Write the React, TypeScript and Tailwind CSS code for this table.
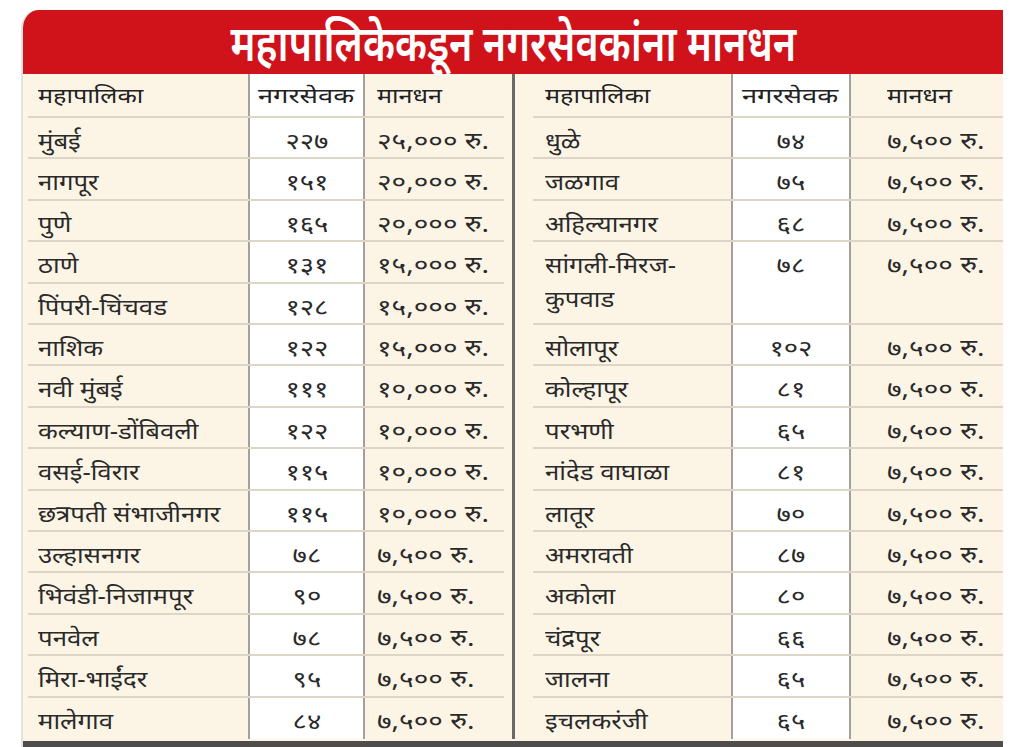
const font = { fontFamily: '"Noto Sans", "Noto Sans Devanagari", "Lato", sans-serif' };

type Row = { name: string[]; count: string; amount: string; tall?: boolean };

const left: Row[] = [
  { name: ["मुंबई"], count: "२२७", amount: "२५,००० रु." },
  { name: ["नागपूर"], count: "१५१", amount: "२०,००० रु." },
  { name: ["पुणे"], count: "१६५", amount: "२०,००० रु." },
  { name: ["ठाणे"], count: "१३१", amount: "१५,००० रु." },
  { name: ["पिंपरी-चिंचवड"], count: "१२८", amount: "१५,००० रु." },
  { name: ["नाशिक"], count: "१२२", amount: "१५,००० रु." },
  { name: ["नवी मुंबई"], count: "१११", amount: "१०,००० रु." },
  { name: ["कल्याण-डोंबिवली"], count: "१२२", amount: "१०,००० रु." },
  { name: ["वसई-विरार"], count: "११५", amount: "१०,००० रु." },
  { name: ["छत्रपती संभाजीनगर"], count: "११५", amount: "१०,००० रु." },
  { name: ["उल्हासनगर"], count: "७८", amount: "७,५०० रु." },
  { name: ["भिवंडी-निजामपूर"], count: "९०", amount: "७,५०० रु." },
  { name: ["पनवेल"], count: "७८", amount: "७,५०० रु." },
  { name: ["मिरा-भाईंदर"], count: "९५", amount: "७,५०० रु." },
  { name: ["मालेगाव"], count: "८४", amount: "७,५०० रु." },
];

const right: Row[] = [
  { name: ["धुळे"], count: "७४", amount: "७,५०० रु." },
  { name: ["जळगाव"], count: "७५", amount: "७,५०० रु." },
  { name: ["अहिल्यानगर"], count: "६८", amount: "७,५०० रु." },
  { name: ["सांगली-मिरज-", "कुपवाड"], count: "७८", amount: "७,५०० रु.", tall: true },
  { name: ["सोलापूर"], count: "१०२", amount: "७,५०० रु." },
  { name: ["कोल्हापूर"], count: "८१", amount: "७,५०० रु." },
  { name: ["परभणी"], count: "६५", amount: "७,५०० रु." },
  { name: ["नांदेड वाघाळा"], count: "८१", amount: "७,५०० रु." },
  { name: ["लातूर"], count: "७०", amount: "७,५०० रु." },
  { name: ["अमरावती"], count: "८७", amount: "७,५०० रु." },
  { name: ["अकोला"], count: "८०", amount: "७,५०० रु." },
  { name: ["चंद्रपूर"], count: "६६", amount: "७,५०० रु." },
  { name: ["जालना"], count: "६५", amount: "७,५०० रु." },
  { name: ["इचलकरंजी"], count: "६५", amount: "७,५०० रु." },
];

function Half({ rows, side }: { rows: Row[]; side: "left" | "right" }) {
  const isLeft = side === "left";
  const c1 = isLeft ? "w-[225px] pl-[15px]" : "w-[216px] pl-[30px]";
  const c2 = isLeft ? "w-[117px]" : "w-[120px]";
  const c3 = isLeft ? "flex-1 pl-[12px]" : "flex-1 pl-[36px]";
  const line = isLeft ? "ml-[5px] mr-[8px]" : "ml-[18px]";
  return (
    <div className="flex h-full flex-1 flex-col">
      {/* header */}
      <div className="relative flex h-[44px] items-center text-[21px] text-[#222]">
        <div className={`${c1} flex h-full items-center`}>
          <span className="inline-block origin-left scale-x-[1.2]">महापालिका</span>
        </div>
        <div className={`${c2} flex h-full items-center justify-center border-x-2 border-[#a4a09a] bg-white`}>
          <span className="inline-block scale-x-[1.3]">नगरसेवक</span>
        </div>
        <div className={`${c3} flex h-full items-center`}>
          <span className="inline-block origin-left scale-x-[1.2]">मानधन</span>
        </div>
        <div className={`absolute bottom-0 left-0 right-0 h-[2px] bg-[#ddd6c6] ${line}`} />
      </div>
      {rows.map((r, i) => (
        <div
          key={i}
          className={`relative flex text-[23px] leading-[34px] text-[#2a2a2a] ${r.tall ? "flex-[2]" : "flex-1"}`}
        >
          <div className={`${c1} pt-[5px]`}>
            {r.name.map((n) => (
              <div key={n} className="origin-left scale-x-[1.12] whitespace-nowrap">
                {n}
              </div>
            ))}
          </div>
          <div className={`${c2} border-x-2 border-[#a4a09a] bg-white pt-[5px] text-center`}>
            <span className="inline-block scale-x-[1.2]">{r.count}</span>
          </div>
          <div className={`${c3} pt-[5px] whitespace-nowrap`}>
            <span className="inline-block origin-left scale-x-[1.22]">{r.amount}</span>
          </div>
          {i < rows.length - 1 && (
            <div className={`absolute bottom-0 left-0 right-0 h-[2px] bg-[#ddd6c6] ${line}`} />
          )}
        </div>
      ))}
    </div>
  );
}

export default function App() {
  return (
    <div className="h-[747px] w-[1027px] bg-white pl-[21px] pt-[10px]" style={font}>
      <div className="flex h-[737px] w-[982px] flex-col overflow-hidden rounded-tl-[18px] border-l-2 border-[#e4e2de] bg-[#fcf5e6]">
        <div className="flex h-[64px] items-center justify-center bg-[#d0121b] text-white">
          <span className="inline-block scale-x-[0.81] text-[49px] font-semibold leading-[64px]">
            महापालिकेकडून नगरसेवकांना मानधन
          </span>
        </div>
        <div className="flex flex-1 pb-[2px]">
          <Half rows={left} side="left" />
          <div className="w-[3px] bg-[#6b6966]" />
          <Half rows={right} side="right" />
        </div>
        <div className="h-[6px] bg-[#4e4d4b]" />
      </div>
    </div>
  );
}
